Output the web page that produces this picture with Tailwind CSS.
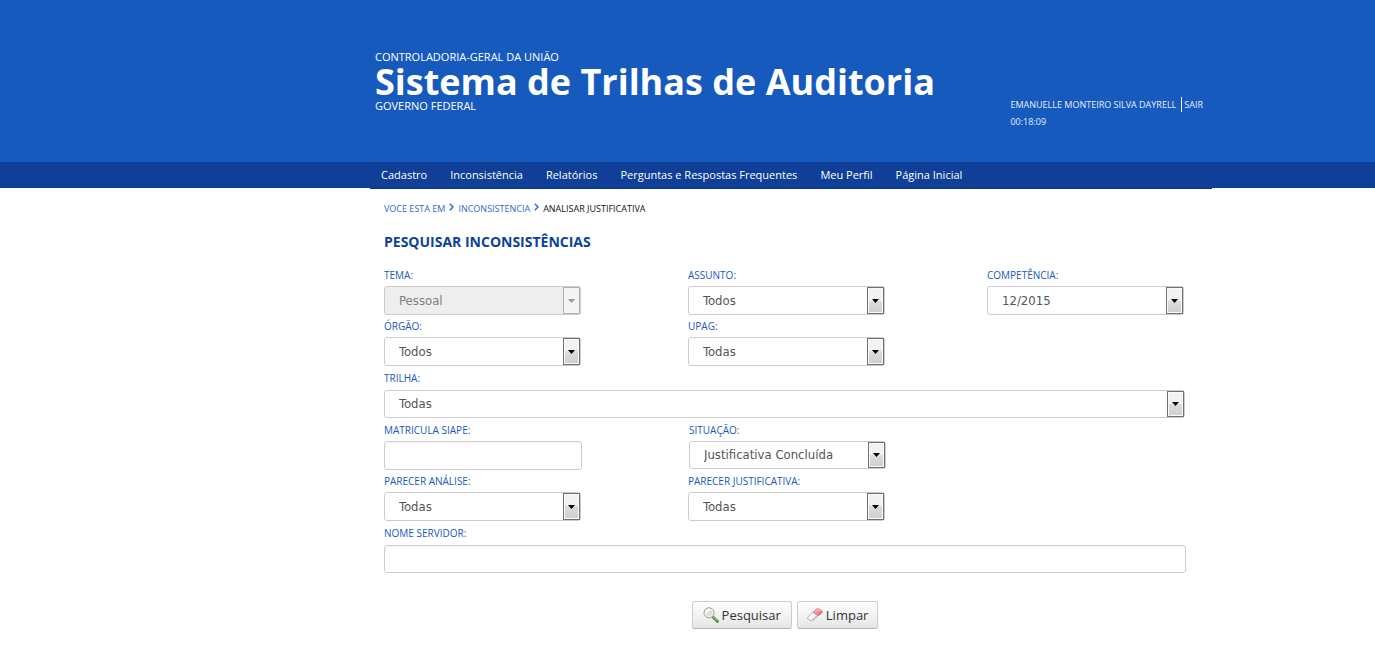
<!DOCTYPE html>
<html lang="pt-BR">
<head>
<meta charset="utf-8">
<meta name="viewport" content="width=device-width, initial-scale=1">
<title>Sistema de Trilhas de Auditoria</title>
<script src="https://cdn.jsdelivr.net/npm/@tailwindcss/browser@4"></script>
</head>
<body class="bg-white font-['Open_Sans',sans-serif] text-[#1757c0]">
<header class="bg-[#175abe] pt-[50px] pl-[370px] text-white">
  <div class="flex h-28 max-w-[842px] justify-between pl-[5px]">
    <div class="text-[11px] leading-[14px]">
      <p>CONTROLADORIA-GERAL DA UNIÃO</p>
      <h1 class="whitespace-nowrap text-[36px] leading-[35px] font-bold">Sistema de Trilhas de Auditoria</h1>
      <p>GOVERNO FEDERAL</p>
    </div>
    <div class="pt-[46px] pr-[9px] text-[9px] leading-[17px] whitespace-nowrap text-[#e4edfa]">
      <p class="flex"><span class="pr-[5px]">EMANUELLE MONTEIRO SILVA DAYRELL</span><a href="#" class="my-px border-l border-white pl-[2px] leading-[15px]">SAIR</a></p>
      <p>00:18:09</p>
    </div>
  </div>
</header>
<nav class="h-[26px] bg-[#0f3f96] pl-[370px]">
  <ul class="flex h-[27px] max-w-[842px] gap-[23px] border-b border-[#0b347d] bg-[#0f3f96] pl-[11px] text-[11px] leading-[26px] whitespace-nowrap text-white">
    <li><a href="#">Cadastro</a></li>
    <li><a href="#">Inconsistência</a></li>
    <li><a href="#">Relatórios</a></li>
    <li><a href="#">Perguntas e Respostas Frequentes</a></li>
    <li><a href="#">Meu Perfil</a></li>
    <li><a href="#">Página Inicial</a></li>
  </ul>
</nav>
<main class="ml-[370px] max-w-[842px] pt-[14px] pl-[14px] pr-[26px]">
  <div class="flex gap-1 text-[9px] leading-[14px] text-[#2f66d0]" aria-label="Trilha de navegação">
    <span>VOCE ESTA EM</span>
    <svg class="mt-px h-2 w-[5px]" viewBox="0 0 5 8" fill="none" stroke="#2f6be0" stroke-width="1.5"><path d="M.8 .8 4 4 .8 7.200"/></svg>
    <a href="#">INCONSISTENCIA</a>
    <svg class="mt-px h-2 w-[5px]" viewBox="0 0 5 8" fill="none" stroke="#2f6be0" stroke-width="1.5"><path d="M.8 .8 4 4 .8 7.200"/></svg>
    <span class="text-[#111]">ANALISAR JUSTIFICATIVA</span>
  </div>
  <h2 class="mt-4 text-[14px] leading-5 font-bold text-[#0a429b]">PESQUISAR INCONSISTÊNCIAS</h2>
  <form class="mt-4 text-[10px] leading-[14px]">
    <div class="grid grid-cols-[304px_299px_1fr]">
      <div class="h-[51px]">
        <label for="tema" class="block h-[18px]">TEMA:</label>
        <div class="relative w-[197px]">
          <select id="tema" disabled class="block h-[29px] w-full appearance-none rounded-[3px] border border-[#ccc] bg-[#eee] px-[14px] font-['DejaVu_Sans_Condensed','DejaVu_Sans',sans-serif] text-[13px] text-[#808080] opacity-100"><option>Pessoal</option></select>
          <span class="pointer-events-none absolute inset-y-px right-px flex w-[17px] items-center justify-center border border-[#adb2b5] bg-[#f4f4f4]"><svg width="7" height="4" viewBox="0 0 7 4" fill="#999"><path d="M0 0h7L3.500 4z"/></svg></span>
        </div>
      </div>
      <div class="h-[51px]">
        <label for="assunto" class="block h-[18px]">ASSUNTO:</label>
        <div class="relative w-[197px]">
          <select id="assunto" class="block h-[29px] w-full appearance-none rounded-[3px] border border-[#ccc] bg-white px-[14px] font-['DejaVu_Sans_Condensed','DejaVu_Sans',sans-serif] text-[13px] text-[#555]"><option>Todos</option></select>
          <span class="pointer-events-none absolute inset-y-px right-px flex w-[17px] items-center justify-center border border-[#707070] bg-linear-to-b from-[#f2f2f2] from-50% via-[#ddd] via-50% to-[#cfcfcf] shadow-[inset_0_0_0_1px_#fafafa]"><svg width="7" height="4" viewBox="0 0 7 4" fill="#000"><path d="M0 0h7L3.500 4z"/></svg></span>
        </div>
      </div>
      <div class="h-[51px]">
        <label for="competencia" class="block h-[18px]">COMPETÊNCIA:</label>
        <div class="relative w-[197px]">
          <select id="competencia" class="block h-[29px] w-full appearance-none rounded-[3px] border border-[#ccc] bg-white px-[14px] font-['DejaVu_Sans_Condensed','DejaVu_Sans',sans-serif] text-[13px] text-[#555]"><option>12/2015</option></select>
          <span class="pointer-events-none absolute inset-y-px right-px flex w-[17px] items-center justify-center border border-[#707070] bg-linear-to-b from-[#f2f2f2] from-50% via-[#ddd] via-50% to-[#cfcfcf] shadow-[inset_0_0_0_1px_#fafafa]"><svg width="7" height="4" viewBox="0 0 7 4" fill="#000"><path d="M0 0h7L3.500 4z"/></svg></span>
        </div>
      </div>
      <div class="h-[51px]">
        <label for="orgao" class="block h-[18px]">ÓRGÃO:</label>
        <div class="relative w-[197px]">
          <select id="orgao" class="block h-[29px] w-full appearance-none rounded-[3px] border border-[#ccc] bg-white px-[14px] font-['DejaVu_Sans_Condensed','DejaVu_Sans',sans-serif] text-[13px] text-[#555]"><option>Todos</option></select>
          <span class="pointer-events-none absolute inset-y-px right-px flex w-[17px] items-center justify-center border border-[#707070] bg-linear-to-b from-[#f2f2f2] from-50% via-[#ddd] via-50% to-[#cfcfcf] shadow-[inset_0_0_0_1px_#fafafa]"><svg width="7" height="4" viewBox="0 0 7 4" fill="#000"><path d="M0 0h7L3.500 4z"/></svg></span>
        </div>
      </div>
      <div class="col-span-2 h-[51px]">
        <label for="upag" class="block h-[18px]">UPAG:</label>
        <div class="relative w-[197px]">
          <select id="upag" class="block h-[29px] w-full appearance-none rounded-[3px] border border-[#ccc] bg-white px-[14px] font-['DejaVu_Sans_Condensed','DejaVu_Sans',sans-serif] text-[13px] text-[#555]"><option>Todas</option></select>
          <span class="pointer-events-none absolute inset-y-px right-px flex w-[17px] items-center justify-center border border-[#707070] bg-linear-to-b from-[#f2f2f2] from-50% via-[#ddd] via-50% to-[#cfcfcf] shadow-[inset_0_0_0_1px_#fafafa]"><svg width="7" height="4" viewBox="0 0 7 4" fill="#000"><path d="M0 0h7L3.500 4z"/></svg></span>
        </div>
      </div>
      <div class="col-span-3 h-[53px] pt-px">
        <label for="trilha" class="block h-[19px]">TRILHA:</label>
        <div class="relative mr-px">
          <select id="trilha" class="block h-7 w-full appearance-none rounded-[3px] border border-[#ccc] bg-white px-[14px] font-['DejaVu_Sans_Condensed','DejaVu_Sans',sans-serif] text-[13px] text-[#555]"><option>Todas</option></select>
          <span class="pointer-events-none absolute inset-y-px right-px flex w-[17px] items-center justify-center border border-[#707070] bg-linear-to-b from-[#f2f2f2] from-50% via-[#ddd] via-50% to-[#cfcfcf] shadow-[inset_0_0_0_1px_#fafafa]"><svg width="7" height="4" viewBox="0 0 7 4" fill="#000"><path d="M0 0h7L3.500 4z"/></svg></span>
        </div>
      </div>
      <div class="h-[51px]">
        <label for="matricula" class="block h-[18px]">MATRICULA SIAPE:</label>
        <input id="matricula" type="text" class="block h-[29px] w-[198px] rounded-[3px] border border-[#ccc] bg-white px-[14px] text-[13px] text-[#555] shadow-[inset_0_1px_1px_#00000008]">
      </div>
      <div class="col-span-2 h-[51px] pl-px">
        <label for="situacao" class="block h-[18px]">SITUAÇÃO:</label>
        <div class="relative w-[197px]">
          <select id="situacao" class="block h-7 w-full appearance-none rounded-[3px] border border-[#ccc] bg-white px-[14px] font-['DejaVu_Sans_Condensed','DejaVu_Sans',sans-serif] text-[13px] text-[#555]"><option>Justificativa Concluída</option></select>
          <span class="pointer-events-none absolute inset-y-px right-px flex w-[17px] items-center justify-center border border-[#707070] bg-linear-to-b from-[#f2f2f2] from-50% via-[#ddd] via-50% to-[#cfcfcf] shadow-[inset_0_0_0_1px_#fafafa]"><svg width="7" height="4" viewBox="0 0 7 4" fill="#000"><path d="M0 0h7L3.500 4z"/></svg></span>
        </div>
      </div>
      <div class="h-[51px]">
        <label for="analise" class="block h-[18px]">PARECER ANÁLISE:</label>
        <div class="relative w-[197px]">
          <select id="analise" class="block h-[29px] w-full appearance-none rounded-[3px] border border-[#ccc] bg-white px-[14px] font-['DejaVu_Sans_Condensed','DejaVu_Sans',sans-serif] text-[13px] text-[#555]"><option>Todas</option></select>
          <span class="pointer-events-none absolute inset-y-px right-px flex w-[17px] items-center justify-center border border-[#707070] bg-linear-to-b from-[#f2f2f2] from-50% via-[#ddd] via-50% to-[#cfcfcf] shadow-[inset_0_0_0_1px_#fafafa]"><svg width="7" height="4" viewBox="0 0 7 4" fill="#000"><path d="M0 0h7L3.500 4z"/></svg></span>
        </div>
      </div>
      <div class="col-span-2 h-[51px]">
        <label for="justificativa" class="block h-[18px]">PARECER JUSTIFICATIVA:</label>
        <div class="relative w-[197px]">
          <select id="justificativa" class="block h-[29px] w-full appearance-none rounded-[3px] border border-[#ccc] bg-white px-[14px] font-['DejaVu_Sans_Condensed','DejaVu_Sans',sans-serif] text-[13px] text-[#555]"><option>Todas</option></select>
          <span class="pointer-events-none absolute inset-y-px right-px flex w-[17px] items-center justify-center border border-[#707070] bg-linear-to-b from-[#f2f2f2] from-50% via-[#ddd] via-50% to-[#cfcfcf] shadow-[inset_0_0_0_1px_#fafafa]"><svg width="7" height="4" viewBox="0 0 7 4" fill="#000"><path d="M0 0h7L3.500 4z"/></svg></span>
        </div>
      </div>
      <div class="col-span-3 pt-px">
        <label for="nome" class="block h-[19px]">NOME SERVIDOR:</label>
        <input id="nome" type="text" class="block h-7 w-full rounded-[3px] border border-[#ccc] bg-white px-[14px] text-[13px] text-[#555] shadow-[inset_0_1px_1px_#00000008]">
      </div>
    </div>
    <div class="mt-7 flex justify-center gap-[5px] text-[13px] text-[#333]">
      <button type="button" class="flex h-7 items-center gap-[3px] rounded-[3px] border border-[#ccc] border-b-[#b3b3b3] bg-linear-to-b from-white to-[#e6e6e6] px-[10px] shadow-[0_1px_2px_#0000000d]">
        <svg width="16" height="16" viewBox="0 0 16 16" fill="none"><path d="m10.500 10.500 4 3.800" stroke="#5c9138" stroke-width="3" stroke-linecap="round"/><path d="m10.800 10.300 3.700 3.300" stroke="#a5cf7c" stroke-linecap="round"/><circle cx="6" cy="5.800" r="5" fill="#dde0e2" stroke="#999"/><circle cx="6" cy="5.800" r="4" stroke="#f5f5f5"/><path d="M3.500 6c0-2 1.500-3 3.500-3" stroke="#fff" stroke-width="1.500"/></svg>
        Pesquisar
      </button>
      <button type="button" class="flex h-7 items-center gap-[3px] rounded-[3px] border border-[#ccc] border-b-[#b3b3b3] bg-linear-to-b from-white to-[#e6e6e6] px-[9px] shadow-[0_1px_2px_#0000000d]">
        <svg width="16" height="16" viewBox="0 0 16 16"><path d="M.8 10 6 5l5 3.800-5 4.700q-.9.800-2 .2L1.200 12.200Q.2 11.500.8 10z" fill="#f4f4f4" stroke="#aaa" stroke-width=".8"/><path d="m4.800 12.800 5.500-5L11 8.800l-5 4.700q-.6.600-1.400.4z" fill="#c4c4c4"/><path d="m6 5 3.300-3q1-.9 2.200-.4L14.700 3.500q1 .7.500 2L11 8.800z" fill="#f0939f" stroke="#d9717f" stroke-width=".6"/><path d="m8 4.700 2.400-2.200 3 1.600" fill="none" stroke="#fac8cd"/><path d="m10.300 7.700 4.600-3.700.3 1.500L11 8.800z" fill="#d35f70"/></svg>
        Limpar
      </button>
    </div>
  </form>
</main>
</body>
</html>
